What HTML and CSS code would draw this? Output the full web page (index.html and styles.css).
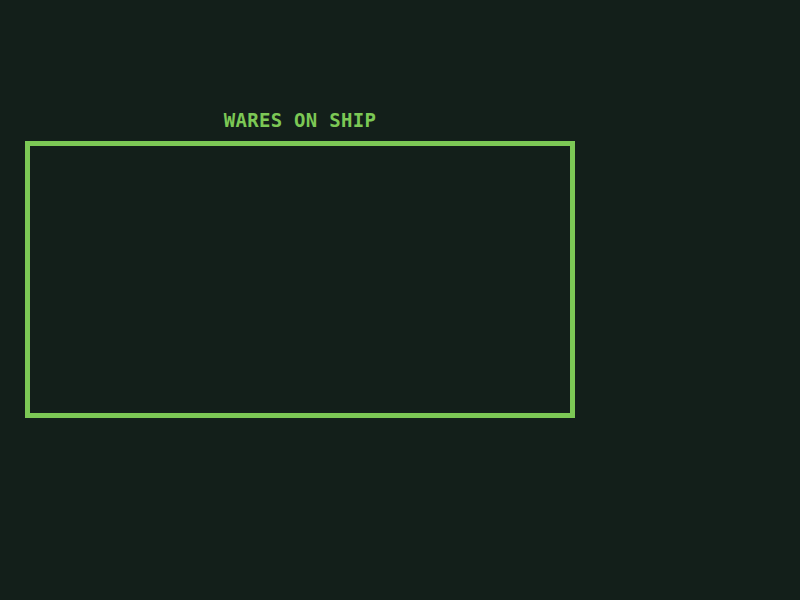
FILE: index.html
```html
<!DOCTYPE html>
<html>
<head>
<meta charset="utf-8">
<link rel="stylesheet" href="styles.css">
</head>
<body>
<div class="panel">
  <div class="title">WARES ON SHIP</div>
  <div class="box"></div>
</div>
</body>
</html>
```
FILE: styles.css
```css
html, body {
  margin: 0;
  padding: 0;
  background: #131f1a;
  width: 800px;
  height: 600px;
  overflow: hidden;
}
.panel {
  display: flex;
  flex-direction: column;
  width: 550px;
  margin-left: 25px;
  padding-top: 108px;
}
.title {
  font-family: "DejaVu Sans Mono", monospace;
  font-weight: bold;
  font-size: 19px;
  line-height: 24px;
  color: #7cc855;
  text-align: center;
  letter-spacing: 0.3px;
  margin-bottom: 9px;
}
.box {
  height: 277px;
  box-sizing: border-box;
  border: 5px solid #7cc855;
}
```
